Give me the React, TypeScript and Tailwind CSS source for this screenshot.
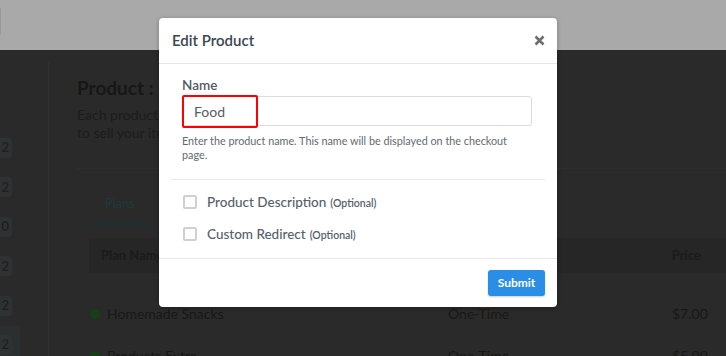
import React from "react";

const font = { fontFamily: "Lato, 'Open Sans', sans-serif" };

function SidebarPill({ label }: { label: string }) {
  return (
    <div className="flex h-[39.5px] items-center">
      <div className="flex h-[20px] w-[12px] items-center justify-end rounded-r-[4px] bg-[#2f3233] pr-[3px] text-[13px] font-semibold text-[#1e1e1e]">
        {label}
      </div>
    </div>
  );
}

export default function App() {
  return (
    <div className="relative h-[356px] w-[726px] overflow-hidden bg-[#2a2a2a]" style={font}>
      {/* header */}
      <div className="flex h-[50px] flex-col bg-[#a9a9a9] pt-[8px]">
        <div className="h-[27px] w-[1px] bg-[#9a9a9a]" />
      </div>
      <div className="flex h-[306px]">
        {/* sidebar */}
        <div className="mt-[12px] flex w-[49px] flex-col border-r border-[#313131]">
          <div className="mt-[55px] h-[1px] w-[20px] bg-[#333]" />
          <div>
            <div className="h-[11px]" />
            <SidebarPill label="2" />
            <SidebarPill label="2" />
            <SidebarPill label="0" />
            <SidebarPill label="2" />
            <SidebarPill label="2" />
            <div className="flex h-[39px] w-[20px] items-center bg-[#2c2f30]">
              <div className="flex h-[20px] w-[12px] items-center justify-end rounded-r-[4px] bg-[#2f3233] pr-[3px] text-[13px] font-semibold text-[#1e1e1e]">
                2
              </div>
            </div>
          </div>
        </div>
        {/* main */}
        <div className="flex-1 pl-[28px] pt-[26px]">
          <div className="h-[24px] text-[19px] font-bold leading-[24px] text-[#171717]">Product : Food</div>
          <div className="mt-[6px] text-[14px] leading-[18px] text-[#1c1c1c]">
            <div>Each product can have multiple plans</div>
            <div>to sell your items in different ways.</div>
          </div>
          <div className="mt-[26px] h-[1px] bg-[#2e2e2e]" />
          <div className="ml-[12px]">
            <div className="mt-[26px] flex">
              <div className="flex h-[30px] w-[63px] flex-col justify-between">
                <div className="pl-[16px] text-[13px] leading-[16px] text-[#1d393b]">Plans</div>
                <div className="h-[2px] bg-[#183236]" />
              </div>
            </div>
            <div className="mt-[13px] flex h-[35px] items-center justify-between bg-[#262626] pl-[12px] pr-[25px] text-[13px] font-bold text-[#1b1b1b]">
              <span>Plan Name</span>
              <span>Price</span>
            </div>
            <div className="flex h-[61px] items-end border-b border-[#282828] pb-[9px] text-[14px] text-[#181818]">
              <div className="flex w-[359px] items-center">
                <div className="ml-[1px] mr-[7px] h-[10px] w-[10px] rounded-full bg-[#173f17]" />
                <span>Homemade Snacks</span>
              </div>
              <span className="w-[224px]">One-Time</span>
              <span>$7.00</span>
            </div>
            <div className="flex h-[32px] items-end text-[14px] text-[#181818]">
              <div className="flex w-[359px] items-center">
                <div className="ml-[1px] mr-[7px] h-[10px] w-[10px] rounded-full bg-[#173f17]" />
                <span>Products Extra</span>
              </div>
              <span className="w-[224px]">One-Time</span>
              <span>$5.00</span>
            </div>
          </div>
        </div>
      </div>

      {/* modal */}
      <div className="absolute left-[159px] top-[18px] flex h-[289px] w-[398px] flex-col rounded-[4px] bg-white shadow-[0_1px_4px_rgba(0,0,0,0.3)]">
        <div className="flex h-[46px] shrink-0 items-center justify-between border-b border-[#e6e6e6] pl-[13px] pr-[12px]">
          <span className="text-[15px] font-semibold text-[#3b4650]">Edit Product</span>
          <svg width="11" height="11" viewBox="0 0 11 11">
            <path d="M1.5 1.5 L9.5 9.5 M9.5 1.5 L1.5 9.5" stroke="#6e6e6e" strokeWidth="2.6" strokeLinecap="butt" />
          </svg>
        </div>
        <div className="flex-1 px-[12px] pt-[13px]">
          <div className="px-[11px]">
            <div className="text-[13.5px] font-semibold leading-[16px] text-[#525b63]">Name</div>
            <div className="relative mt-[3px] flex h-[30px] w-[350px] items-center rounded-[3px] border border-[#dcdcdc] px-[11px] text-[14px] text-[#555c62]">
              Food
              <div className="absolute left-[-1px] top-[-2px] h-[33px] w-[76px] rounded-[2px] border-2 border-[#ff0000]" />
            </div>
            <div className="mt-[8px] w-[336px] text-[10.8px] leading-[14px] text-[#626a70]">
              Enter the product name. This name will be displayed on the checkout page.
            </div>
          </div>
          <div className="mt-[17px] h-[1px] bg-[#e8e8e8]" />
          <div className="px-[12px] pt-[6px]">
            {["Product Description", "Custom Redirect"].map((t) => (
              <div key={t} className="flex h-[32px] items-center">
                <div className="h-[14px] w-[14px] rounded-[2px] border-2 border-[#d0d0d0]" />
                <div className="ml-[10px] flex items-baseline">
                  <span className="text-[13.5px] font-medium text-[#56616a]">{t}</span>
                  <span className="ml-[4px] text-[10.5px] font-semibold text-[#56616a]">(Optional)</span>
                </div>
              </div>
            ))}
          </div>
        </div>
        <div className="flex h-[49px] shrink-0 items-start justify-end border-t border-[#e8e8e8] pr-[12px] pt-[11px]">
          <button className="h-[26px] w-[57px] rounded-[3px] bg-[#2a8de6] text-[12px] font-bold text-white shadow-[0_1px_2px_rgba(0,0,0,0.2)]">
            Submit
          </button>
        </div>
      </div>
    </div>
  );
}
